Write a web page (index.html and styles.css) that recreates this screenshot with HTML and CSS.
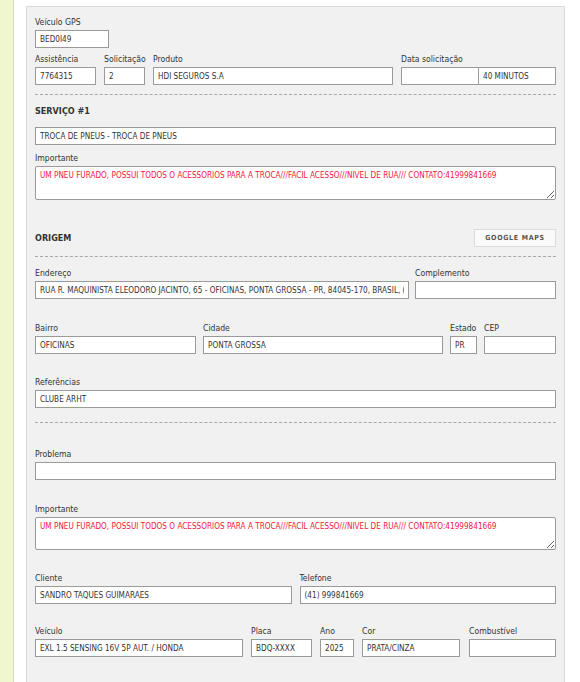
FILE: index.html
```html
<!DOCTYPE html>
<html lang="pt-BR">
<head>
    <meta charset="UTF-8">
    <meta name="viewport" content="width=device-width, initial-scale=1.0">
    <title>Atendimento - Serviço</title>
    <link rel="stylesheet" href="styles.css">
</head>
<body>
    <div class="page">
        <div class="sidebar"></div>
        <div class="content">
            <div class="panel">

                <div class="row">
                    <div class="field w-gps">
                        <label>Veículo GPS</label>
                        <input type="text" value="BED0I49">
                    </div>
                </div>

                <div class="row mt-6">
                    <div class="field w-assist">
                        <label>Assistência</label>
                        <input type="text" value="7764315">
                    </div>
                    <div class="field w-solic">
                        <label>Solicitação</label>
                        <input type="text" value="2">
                    </div>
                    <div class="field grow">
                        <label>Produto</label>
                        <input type="text" value="HDI SEGUROS S.A">
                    </div>
                    <div class="field w-data">
                        <label>Data solicitação</label>
                        <div class="pair">
                            <input type="text" value="">
                            <input type="text" value="40 MINUTOS">
                        </div>
                    </div>
                </div>

                <hr class="sep mt-9">

                <!-- servico -->
                <h3 class="section-title mt-10">SERVIÇO #1</h3>
                <input type="text" class="mt-10" value="TROCA DE PNEUS - TROCA DE PNEUS">

                <div class="field mt-8">
                    <label>Importante</label>
                    <textarea class="alert-text">UM PNEU FURADO, POSSUI TODOS O ACESSORIOS PARA A TROCA///FACIL ACESSO///NIVEL DE RUA/// CONTATO:41999841669</textarea>
                </div>

                <!-- origem -->
                <div class="section-head mt-29">
                    <h3 class="section-title">ORIGEM</h3>
                    <button type="button" class="btn-maps">GOOGLE MAPS</button>
                </div>

                <hr class="sep mt-9">

                <div class="row mt-11">
                    <div class="field w-end">
                        <label>Endereço</label>
                        <input type="text" value="RUA R. MAQUINISTA ELEODORO JACINTO, 65 - OFICINAS, PONTA GROSSA - PR, 84045-170, BRASIL, (-25.1012, -50.1598)">
                    </div>
                    <div class="field grow">
                        <label>Complemento</label>
                        <input type="text" value="">
                    </div>
                </div>

                <div class="row gap-7 mt-24">
                    <div class="field w-bairro">
                        <label>Bairro</label>
                        <input type="text" value="OFICINAS">
                    </div>
                    <div class="field grow">
                        <label>Cidade</label>
                        <input type="text" value="PONTA GROSSA">
                    </div>
                    <div class="field w-uf">
                        <label>Estado</label>
                        <input type="text" value="PR">
                    </div>
                    <div class="field w-cep">
                        <label>CEP</label>
                        <input type="text" value="">
                    </div>
                </div>

                <div class="field mt-23">
                    <label>Referências</label>
                    <input type="text" value="CLUBE ARHT">
                </div>

                <hr class="sep mt-14">

                <div class="field mt-26">
                    <label>Problema</label>
                    <input type="text" value="">
                </div>

                <div class="field mt-24">
                    <label>Importante</label>
                    <textarea class="alert-text short">UM PNEU FURADO, POSSUI TODOS O ACESSORIOS PARA A TROCA///FACIL ACESSO///NIVEL DE RUA/// CONTATO:41999841669</textarea>
                </div>

                <!-- cliente / veiculo -->
                <div class="row mt-23">
                    <div class="field grow">
                        <label>Cliente</label>
                        <input type="text" value="SANDRO TAQUES GUIMARAES">
                    </div>
                    <div class="field grow">
                        <label>Telefone</label>
                        <input type="text" value="(41) 999841669">
                    </div>
                </div>

                <div class="row mt-22">
                    <div class="field grow">
                        <label>Veículo</label>
                        <input type="text" value="EXL 1.5 SENSING 16V 5P AUT. / HONDA">
                    </div>
                    <div class="field w-placa">
                        <label>Placa</label>
                        <input type="text" value="BDQ-XXXX">
                    </div>
                    <div class="field w-ano">
                        <label>Ano</label>
                        <input type="text" value="2025">
                    </div>
                    <div class="field w-cor">
                        <label>Cor</label>
                        <input type="text" value="PRATA/CINZA">
                    </div>
                    <div class="field w-comb">
                        <label>Combustível</label>
                        <input type="text" value="">
                    </div>
                </div>

            </div>
        </div>
    </div>
</body>
</html>
```

FILE: styles.css
```css
* {
    box-sizing: border-box;
}

body {
    margin: 0;
    background: #fff;
    font-family: "DejaVu Sans Condensed", "DejaVu Sans", sans-serif;
    font-stretch: condensed;
    color: #333;
}

.page {
    display: flex;
    min-height: 682px;
}

.sidebar {
    width: 14px;
    background: #f0f7cf;
    border-right: 1px solid #d7dcc3;
}

.content {
    flex: 1;
    padding: 6px 15px 0 12px;
}

.panel {
    background: #f1f1f1;
    border: 1px solid #dadada;
    border-bottom: none;
    padding: 10px 8px 30px 8px;
    min-height: 700px;
}

/* linhas e campos */
.row {
    display: flex;
    gap: 8px;
}

.row.gap-7 {
    gap: 7px;
}

.field {
    display: flex;
    flex-direction: column;
    min-width: 0;
}

.field.grow {
    flex: 1;
}

.field label {
    display: block;
    font-size: 8.6px;
    line-height: 11px;
    margin-bottom: 2px;
    color: #333;
    white-space: nowrap;
}

input,
textarea {
    display: block;
    width: 100%;
    font-family: inherit;
    font-stretch: condensed;
    font-size: 8.15px;
    color: #333;
    background: #fff;
    border: 1px solid #9a9a9a;
    outline: none;
}

input {
    height: 18px;
    padding: 0 4px;
    border-radius: 0;
}

textarea {
    height: 34px;
    padding: 3px 4px;
    border-radius: 2px;
    line-height: 11px;
    resize: both;
}

textarea.short {
    height: 33px;
}

.alert-text {
    color: #f2163c;
}

.pair {
    display: flex;
}

.pair input + input {
    margin-left: -1px;
}

.w-gps { width: 74px; }
.w-assist { width: 61px; }
.w-solic { width: 41px; }
.w-data { width: 155px; }
.w-end { width: 374px; }
.w-end + .field { margin-left: -2px; }
.w-bairro { width: 161px; }
.w-uf { width: 27px; }
.w-cep { width: 72px; }
.w-placa { width: 61px; }
.w-ano { width: 34px; }
.w-cor { width: 98px; }
.w-comb { width: 87px; margin-left: 1px; }

/* secoes */
.sep {
    border: 0;
    border-top: 1px dashed #a8a8a8;
    height: 0;
    margin: 0;
}

.section-title {
    margin: 0;
    font-size: 9px;
    line-height: 12px;
    font-weight: bold;
    color: #333;
}

.section-head {
    display: flex;
    justify-content: space-between;
    align-items: center;
    height: 18px;
}

.btn-maps {
    width: 82px;
    height: 18px;
    padding: 0;
    background: #fafafa;
    border: 1px solid #dcdcdc;
    font-family: inherit;
    font-stretch: condensed;
    font-size: 7px;
    font-weight: bold;
    letter-spacing: 0.7px;
    color: #555;
}

.mt-6 { margin-top: 6px; }
.mt-8 { margin-top: 8px; }
.mt-9 { margin-top: 9px; }
.mt-10 { margin-top: 10px; }
.mt-11 { margin-top: 11px; }
.mt-14 { margin-top: 14px; }
.mt-22 { margin-top: 22px; }
.mt-23 { margin-top: 23px; }
.mt-24 { margin-top: 24px; }
.mt-26 { margin-top: 26px; }
.mt-29 { margin-top: 29px; }
```
